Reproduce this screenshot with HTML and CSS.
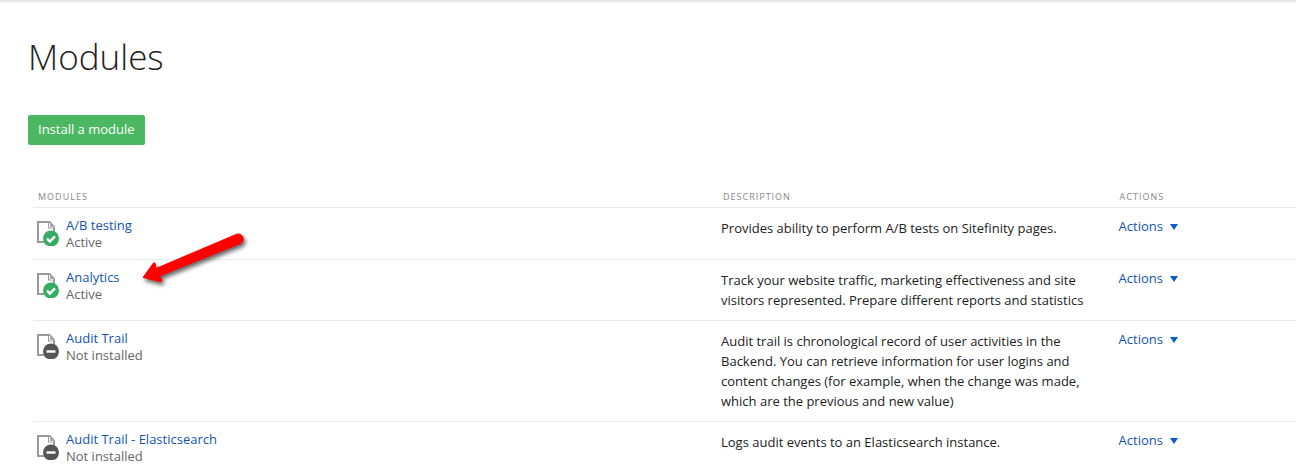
FILE: index.html
```
<!DOCTYPE html>
<html lang="en">
<head>
<meta charset="utf-8">
<title>Modules</title>
<link rel="stylesheet" href="styles.css">
</head>
<body>
<svg class="defs" width="0" height="0" aria-hidden="true">
  <symbol id="page" viewBox="0 0 24 26">
    <path d="M8 22H2V2h11" fill="none" stroke="#999" stroke-width="2"/>
    <path d="M12 1h2l5 5.500V12h-2V8.500h-5z" fill="#999"/>
    <path d="M13.500 2.800v4.400h4.200" fill="none" stroke="#fff" stroke-width="1"/>
    <path d="M14 3l4 4h-4z" fill="#aaa"/>
  </symbol>
  <symbol id="active" viewBox="0 0 24 26">
    <use href="#page"/>
    <circle cx="15" cy="18.500" r="8" fill="#38ab63"/>
    <path d="M11 18.700l2.800 2.800 5.200-5.200" fill="none" stroke="#fff" stroke-width="2.400"/>
  </symbol>
  <symbol id="inactive" viewBox="0 0 24 26">
    <use href="#page"/>
    <circle cx="15" cy="18.500" r="8" fill="#555"/>
    <path d="M10.500 18.500h9" stroke="#fff" stroke-width="2.400"/>
  </symbol>
</svg>
<main class="content">
  <h1 class="title">Modules</h1>
  <button class="install" type="button">Install a module</button>
  <table class="modules">
    <colgroup><col class="col-name"><col class="col-desc"><col class="col-actions"></colgroup>
    <thead>
      <tr><th scope="col">Modules</th><th scope="col">Description</th><th scope="col">Actions</th></tr>
    </thead>
    <tbody>
      <tr>
        <td class="name"><div class="module"><svg class="icon" aria-hidden="true"><use href="#active"/></svg><div><a href="#">A/B testing</a><div class="status">Active</div></div></div></td>
        <td class="desc"><p>Provides ability to perform A/B tests on Sitefinity pages.</p></td>
        <td class="actions"><button type="button">Actions<span class="caret"></span></button></td>
      </tr>
      <tr>
        <td class="name"><div class="module"><svg class="icon" aria-hidden="true"><use href="#active"/></svg><div><a href="#">Analytics</a><div class="status">Active</div></div></div></td>
        <td class="desc"><p>Track your website traffic, marketing effectiveness and site visitors represented. Prepare different reports and statistics</p></td>
        <td class="actions"><button type="button">Actions<span class="caret"></span></button></td>
      </tr>
      <tr>
        <td class="name"><div class="module"><svg class="icon" aria-hidden="true"><use href="#inactive"/></svg><div><a href="#">Audit Trail</a><div class="status">Not installed</div></div></div></td>
        <td class="desc"><p>Audit trail is chronological record of user activities in the Backend. You can retrieve information for user logins and content changes (for example, when the change was made, which are the previous and new value)</p></td>
        <td class="actions"><button type="button">Actions<span class="caret"></span></button></td>
      </tr>
      <tr>
        <td class="name"><div class="module"><svg class="icon" aria-hidden="true"><use href="#inactive"/></svg><div><a href="#">Audit Trail - Elasticsearch</a><div class="status">Not installed</div></div></div></td>
        <td class="desc"><p>Logs audit events to an Elasticsearch instance.</p></td>
        <td class="actions"><button type="button">Actions<span class="caret"></span></button></td>
      </tr>
    </tbody>
  </table>
</main>
<svg class="arrow" width="120" height="65" viewBox="0 0 120 65" aria-hidden="true">
  <path d="M13 52.500L23.500 38Q25.500 37 25.500 40L26 43.500L106 9.500A5 5 0 0 1 110.500 18.500L29.500 51L32 55Q32 57 29.500 56.500Z" fill="#f00" stroke="#f00" stroke-linejoin="round"/>
</svg>
</body>
</html>
```
FILE: styles.css
```
* { box-sizing: border-box; }
body {
  min-height: 100vh;
  margin: 0;
  background: linear-gradient(#e4e4e4, #fff 4px) no-repeat;
  color: #222;
  font: 13px/20px "Open Sans", "Noto Sans", sans-serif;
  border-top: 1px solid #e2e2e2;
}
.defs { position: absolute; }
.content { padding: 32px 0 0 28px; }
.title {
  margin: 0 0 34px;
  color: #222;
  font-size: 35px;
  font-weight: 300;
  line-height: 48px;
}
.install {
  display: block;
  height: 30px;
  padding: 0 10px 2px;
  border: 0;
  border-radius: 2px;
  background: #4cb762;
  color: #fff;
  font: 400 13px/20px "Open Sans", "Noto Sans", sans-serif;
}
.modules {
  width: calc(100% - 5px);
  margin: 42px 0 0 5px;
  border-collapse: separate;
  border-spacing: 0;
  table-layout: fixed;
}
.col-name { width: 54%; }
.col-desc { width: 31.4%; }
.modules th {
  padding: 0 0 0 5px;
  border-bottom: 1px solid #ebebeb;
  color: #888;
  font-size: 9px;
  font-weight: 400;
  letter-spacing: 1px;
  text-align: left;
  text-transform: uppercase;
}
.modules th + th { padding-left: 8px; }
.modules td {
  padding: 0;
  border-bottom: 1px solid #ebebeb;
  vertical-align: top;
}
.modules tr:last-child td { border-bottom: 0; }
.modules .name { padding: 9px 0 8px 3px; }
.modules tr:last-child .name { padding-bottom: 0; }
.module {
  display: flex;
  gap: 6px;
  line-height: 17px;
}
.icon { width: 24px; height: 26px; margin-top: 3px; }
.module a { color: #1354b0; text-decoration: none; }
.status { color: #666; }
.modules .desc { padding: 10px 16px 10px 6px; }
.desc p { max-width: 370px; margin: 0; }
.modules .actions { padding: 8px 0 0 7px; }
.actions button {
  display: flex;
  align-items: center;
  gap: 7px;
  padding: 0;
  border: 0;
  background: none;
  color: #1354b0;
  font: inherit;
}
.caret {
  margin-top: 2px;
  border: 4px solid transparent;
  border-top: 6px solid #0b5cc4;
  border-bottom: 0;
}
.arrow {
  position: absolute;
  top: 225px;
  left: 130px;
  filter: drop-shadow(2px 3px 2px rgba(0, 0, 0, 0.6));
}
```
